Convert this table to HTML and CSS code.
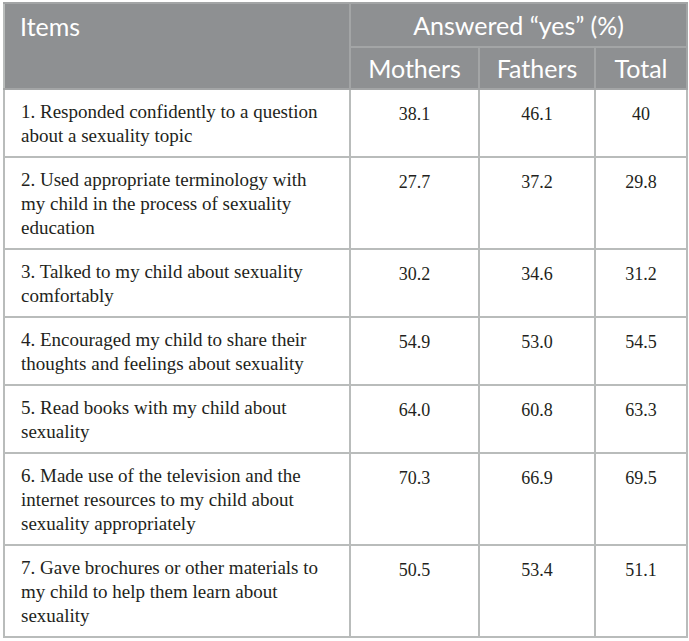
FILE: index.html
```html
<!DOCTYPE html>
<html>
<head>
<meta charset="utf-8">
<link rel="stylesheet" href="styles.css">
</head>
<body>
<table class="data">
  <colgroup>
    <col class="c-items">
    <col class="c-m">
    <col class="c-f">
    <col class="c-t">
  </colgroup>
  <thead>
    <tr class="h1">
      <th class="items" rowspan="2">Items</th>
      <th colspan="3">Answered “yes” (%)</th>
    </tr>
    <tr class="h2">
      <th>Mothers</th>
      <th>Fathers</th>
      <th>Total</th>
    </tr>
  </thead>
  <tbody>
    <tr><td class="txt">1. Responded confidently to a question about a sexuality topic</td><td>38.1</td><td>46.1</td><td>40</td></tr>
    <tr><td class="txt">2. Used appropriate terminology with my child in the process of sexuality education</td><td>27.7</td><td>37.2</td><td>29.8</td></tr>
    <tr><td class="txt">3. Talked to my child about sexuality comfortably</td><td>30.2</td><td>34.6</td><td>31.2</td></tr>
    <tr><td class="txt">4. Encouraged my child to share their thoughts and feelings about sexuality</td><td>54.9</td><td>53.0</td><td>54.5</td></tr>
    <tr><td class="txt">5. Read books with my child about sexuality</td><td>64.0</td><td>60.8</td><td>63.3</td></tr>
    <tr><td class="txt">6. Made use of the television and the internet resources to my child about sexuality appropriately</td><td>70.3</td><td>66.9</td><td>69.5</td></tr>
    <tr><td class="txt">7. Gave brochures or other materials to my child to help them learn about sexuality</td><td>50.5</td><td>53.4</td><td>51.1</td></tr>
  </tbody>
</table>
</body>
</html>
```

FILE: styles.css
```css
html, body {
  margin: 0;
  padding: 0;
  background: #ffffff;
}
body {
  padding: 2px 0 0 3px;
}
.data {
  border-collapse: collapse;
  table-layout: fixed;
  width: 683px;
  border: 2px solid #b9bcbb;
}
.c-items { width: 346px; }
.c-m { width: 129px; }
.c-f { width: 116px; }
.c-t { width: 92px; }

.data th {
  background: #8e9092;
  color: #ffffff;
  font-family: Lato, "Open Sans", sans-serif;
  font-weight: 400;
  font-size: 25px;
  text-align: center;
  border: 2px solid #a3a5a6;
  padding: 0;
}
.data thead tr.h1 th { height: 42px; }
.data thead tr.h2 th { height: 40px; }
.data th.items {
  text-align: left;
  vertical-align: top;
  padding: 7px 0 0 15px;
  border-left-color: #b9bcbb;
}
.data td {
  font-family: "Liberation Serif", "Times New Roman", serif;
  font-size: 18px;
  line-height: 24px;
  color: #231f20;
  text-align: center;
  vertical-align: top;
  border: 2px solid #b9bcbb;
  padding: 12px 8px 6px 8px;
}
.data td.txt {
  font-size: 19px;
  text-align: left;
  padding: 10px 22px 8px 16px;
}
```
